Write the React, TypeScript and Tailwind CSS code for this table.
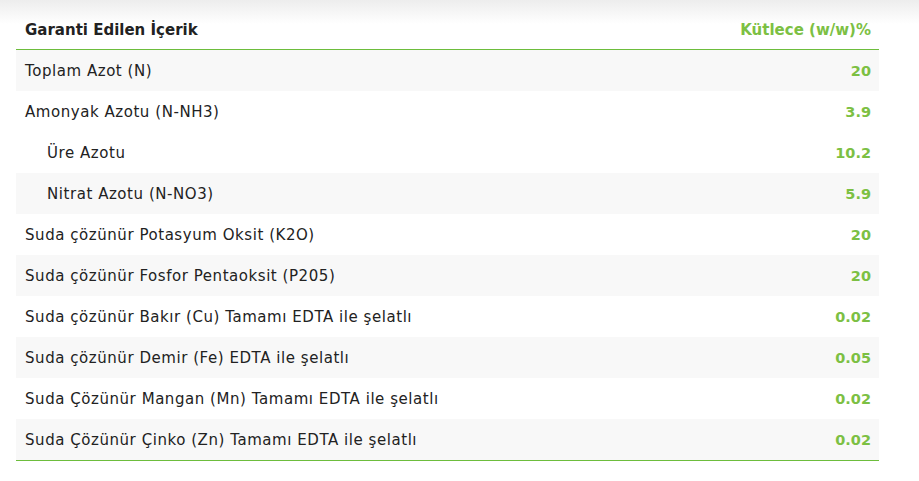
const rows = [
  { name: 'Toplam Azot (N)', value: '20', shade: true },
  { name: 'Amonyak Azotu (N-NH3)', value: '3.9' },
  { name: 'Üre Azotu', value: '10.2', indent: true },
  { name: 'Nitrat Azotu (N-NO3)', value: '5.9', indent: true, shade: true },
  { name: 'Suda çözünür Potasyum Oksit (K2O)', value: '20' },
  { name: 'Suda çözünür Fosfor Pentaoksit (P205)', value: '20', shade: true },
  { name: 'Suda çözünür Bakır (Cu) Tamamı EDTA ile şelatlı', value: '0.02' },
  { name: 'Suda çözünür Demir (Fe) EDTA ile şelatlı', value: '0.05', shade: true },
  { name: 'Suda Çözünür Mangan (Mn) Tamamı EDTA ile şelatlı', value: '0.02' },
  { name: 'Suda Çözünür Çinko (Zn) Tamamı EDTA ile şelatlı', value: '0.02', shade: true },
];

export default function App() {
  return (
    <div
      className="min-h-[481px] w-full bg-[linear-gradient(to_bottom,#ededed,#ffffff_24px)] px-4 text-[#222] text-[15px]"
      style={{ fontFamily: '"DejaVu Sans", "Open Sans", sans-serif' }}
    >
      <div className="w-[863px] border-b border-[#6dbd3c]">
        {/* Header */}
        <div className="flex h-[50px] items-center justify-between border-b border-[#6dbd3c] px-[9px] pr-2 pt-3 font-bold">
          <span className="text-[#222]">Garanti Edilen İçerik</span>
          <span className="text-[#7cc043]">Kütlece (w/w)%</span>
        </div>

        {rows.map((row, i) => (
          <div
            key={i}
            className={`flex h-[41px] items-center justify-between pr-2 pt-[2px] ${row.shade ? 'bg-[#f8f8f8]' : 'bg-white'} ${row.indent ? 'pl-[31px]' : 'pl-[9px]'}`}
          >
            <span className="tracking-[0.55px]">{row.name}</span>
            <span className="font-bold text-[14.5px] text-[#7cc043]">{row.value}</span>
          </div>
        ))}
      </div>
    </div>
  );
}
